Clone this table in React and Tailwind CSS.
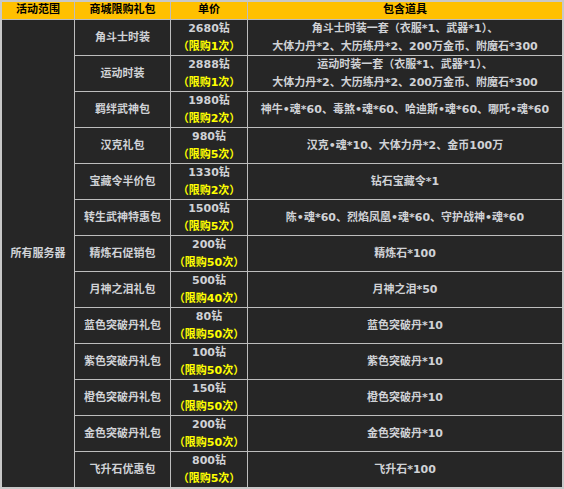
const rows = [
  ["角斗士时装", "2680钻", "（限购1次）", ["角斗士时装一套（衣服*1、武器*1）、", "大体力丹*2、大历练丹*2、200万金币、附魔石*300"]],
  ["运动时装", "2888钻", "（限购1次）", ["运动时装一套（衣服*1、武器*1）、", "大体力丹*2、大历练丹*2、200万金币、附魔石*300"]],
  ["羁绊武神包", "1980钻", "（限购2次）", ["神牛•魂*60、毒煞•魂*60、哈迪斯•魂*60、哪吒•魂*60"]],
  ["汉克礼包", "980钻", "（限购5次）", ["汉克•魂*10、大体力丹*2、金币100万"]],
  ["宝藏令半价包", "1330钻", "（限购2次）", ["钻石宝藏令*1"]],
  ["转生武神特惠包", "1500钻", "（限购5次）", ["陈•魂*60、烈焰凤凰•魂*60、守护战神•魂*60"]],
  ["精炼石促销包", "200钻", "（限购50次）", ["精炼石*100"]],
  ["月神之泪礼包", "500钻", "（限购40次）", ["月神之泪*50"]],
  ["蓝色突破丹礼包", "80钻", "（限购50次）", ["蓝色突破丹*10"]],
  ["紫色突破丹礼包", "100钻", "（限购50次）", ["紫色突破丹*10"]],
  ["橙色突破丹礼包", "150钻", "（限购50次）", ["橙色突破丹*10"]],
  ["金色突破丹礼包", "200钻", "（限购50次）", ["金色突破丹*10"]],
  ["飞升石优惠包", "800钻", "（限购5次）", ["飞升石*100"]],
];

const head = "bg-[#ffc000] text-black flex items-center justify-center";
const cell = "bg-[#262626] text-[#d0d2d6] flex flex-col items-center justify-center text-center leading-[18px]";

export default function App() {
  return (
    <div className="w-[564px] h-[489px] bg-[#c8c8c8] p-[2px] font-['DejaVu_Sans','Noto_Sans_CJK_SC',sans-serif] font-bold text-[11px]">
      <div className="grid grid-cols-[72px_95px_76px_314px] grid-rows-[17px_repeat(13,35px)] gap-px bg-[#bdbdbd]">
        <div className={head}>活动范围</div>
        <div className={head}>商城限购礼包</div>
        <div className={head}>单价</div>
        <div className={head}>包含道具</div>
        <div className={`${cell} row-span-13`}>所有服务器</div>
        {rows.map(([name, price, limit, items]) => (
          <div key={name} className="contents">
            <div className={cell}>{name}</div>
            <div className={cell}>
              <span>{price}</span>
              <span className="text-[#ffff00]">{limit}</span>
            </div>
            <div className={cell}>
              {items.map((t) => (
                <span key={t}>{t}</span>
              ))}
            </div>
          </div>
        ))}
      </div>
    </div>
  );
}
